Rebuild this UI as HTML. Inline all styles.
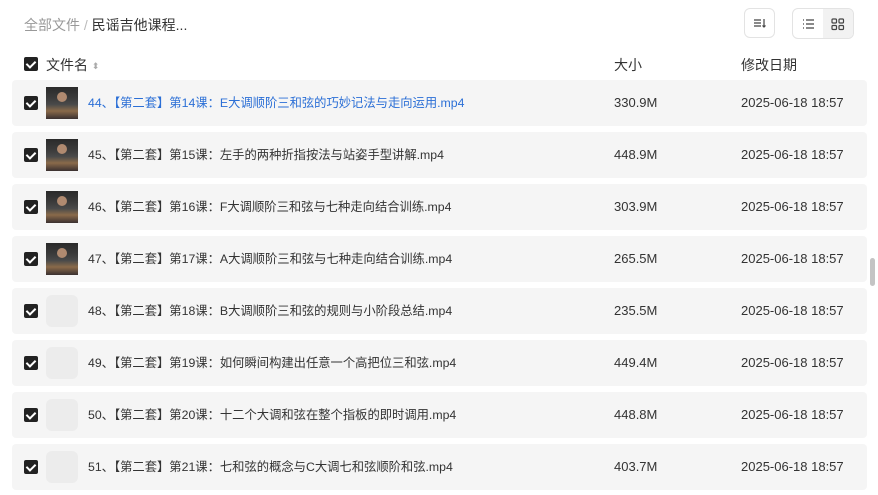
<!DOCTYPE html>
<html><head><meta charset="utf-8"><style>
body{margin:0;width:878px;height:495px;overflow:hidden;background:#fff;font-family:"Liberation Sans","Noto Sans CJK SC",sans-serif;color:#333;position:relative}
.abs{position:absolute}
.cb{position:absolute;width:14px;height:14px;background:#222;border-radius:2px}
.cb:after{content:"";position:absolute;left:4px;top:2px;width:4px;height:7px;border:solid #fff;border-width:0 2px 2px 0;transform:rotate(45deg)}
.row{position:absolute;left:12px;width:855px;height:46px;background:#f5f5f5;border-radius:4px;font-size:13px;line-height:16px}
.row .cb{left:12px;top:16px}
.th{position:absolute;left:34px;top:7px;width:32px;height:32px;border-radius:6px;background:#ececec}
.th.img{border-radius:0;background:linear-gradient(180deg,#2a2a2a 0%,#3b3b3b 35%,#4a4a4a 55%,#8a6a4a 75%,#3a3030 100%)}
.th.img:before{content:"";position:absolute;left:11px;top:5px;width:10px;height:10px;border-radius:50%;background:#b08a70}
.nm{position:absolute;left:76px;top:15px;white-space:nowrap;font-size:12.3px;line-height:16px;height:16px}
.sz{position:absolute;left:602px;top:15px}
.dt{position:absolute;left:729px;top:15px}
</style></head><body>
<div class="abs" style="left:24px;top:15px;font-size:14px;color:#999">全部文件 <span style="color:#bbb">/</span> <span style="color:#333">民谣吉他课程...</span></div>
<div class="abs" style="left:744px;top:8px;width:31px;height:30px;border:1px solid #e3e3e3;border-radius:6px;box-sizing:border-box">
<svg width="31" height="30" viewBox="0 0 31 30" style="position:absolute;left:-1px;top:-1px"><path d="M10 12h7M10 15h7M10 18h7M20 11v8M18.5 17.5l1.5 1.5 1.5-1.5" stroke="#444" stroke-width="1.2" fill="none"/></svg></div>
<div class="abs" style="left:792px;top:8px;width:62px;height:31px;border:1px solid #e3e3e3;border-radius:6px;box-sizing:border-box;overflow:hidden">
<div class="abs" style="left:30px;top:0;width:31px;height:31px;background:#f2f2f2"></div>
<svg width="62" height="30" class="abs" style="left:0;top:0"><path d="M10 11h1M10 15h1M10 19h1M13 11h8M13 15h8M13 19h8" stroke="#444" stroke-width="1.2"/><rect x="39" y="10" width="4.5" height="4" rx="1" fill="none" stroke="#444" stroke-width="1.2"/><rect x="46" y="10" width="4.5" height="4" rx="1" fill="none" stroke="#444" stroke-width="1.2"/><rect x="39" y="16.5" width="4.5" height="4" rx="1" fill="none" stroke="#444" stroke-width="1.2"/><rect x="46" y="16.5" width="4.5" height="4" rx="1" fill="none" stroke="#444" stroke-width="1.2"/></svg></div>
<div class="cb" style="left:24px;top:57px"></div>
<div class="abs" style="left:46px;top:55px;font-size:14px">文件名 <span style="font-size:9px;color:#aaa;vertical-align:1px">⬍</span></div>
<div class="abs" style="left:614px;top:55px;font-size:14px">大小</div>
<div class="abs" style="left:741px;top:55px;font-size:14px">修改日期</div>
<div class="row" style="top:80px"><div class="cb"></div><div class="th img"></div><div class="nm" style="color:#2b6fd6">44、【第二套】第14课：E大调顺阶三和弦的巧妙记法与走向运用.mp4</div><div class="sz">330.9M</div><div class="dt">2025-06-18 18:57</div></div>
<div class="row" style="top:132px"><div class="cb"></div><div class="th img"></div><div class="nm">45、【第二套】第15课：左手的两种折指按法与站姿手型讲解.mp4</div><div class="sz">448.9M</div><div class="dt">2025-06-18 18:57</div></div>
<div class="row" style="top:184px"><div class="cb"></div><div class="th img"></div><div class="nm">46、【第二套】第16课：F大调顺阶三和弦与七种走向结合训练.mp4</div><div class="sz">303.9M</div><div class="dt">2025-06-18 18:57</div></div>
<div class="row" style="top:236px"><div class="cb"></div><div class="th img"></div><div class="nm">47、【第二套】第17课：A大调顺阶三和弦与七种走向结合训练.mp4</div><div class="sz">265.5M</div><div class="dt">2025-06-18 18:57</div></div>
<div class="row" style="top:288px"><div class="cb"></div><div class="th"></div><div class="nm">48、【第二套】第18课：B大调顺阶三和弦的规则与小阶段总结.mp4</div><div class="sz">235.5M</div><div class="dt">2025-06-18 18:57</div></div>
<div class="row" style="top:340px"><div class="cb"></div><div class="th"></div><div class="nm">49、【第二套】第19课：如何瞬间构建出任意一个高把位三和弦.mp4</div><div class="sz">449.4M</div><div class="dt">2025-06-18 18:57</div></div>
<div class="row" style="top:392px"><div class="cb"></div><div class="th"></div><div class="nm">50、【第二套】第20课：十二个大调和弦在整个指板的即时调用.mp4</div><div class="sz">448.8M</div><div class="dt">2025-06-18 18:57</div></div>
<div class="row" style="top:444px"><div class="cb"></div><div class="th"></div><div class="nm">51、【第二套】第21课：七和弦的概念与C大调七和弦顺阶和弦.mp4</div><div class="sz">403.7M</div><div class="dt">2025-06-18 18:57</div></div>
<div class="abs" style="left:870px;top:258px;width:5px;height:28px;border-radius:3px;background:#c4c4c4"></div>
</body></html>
